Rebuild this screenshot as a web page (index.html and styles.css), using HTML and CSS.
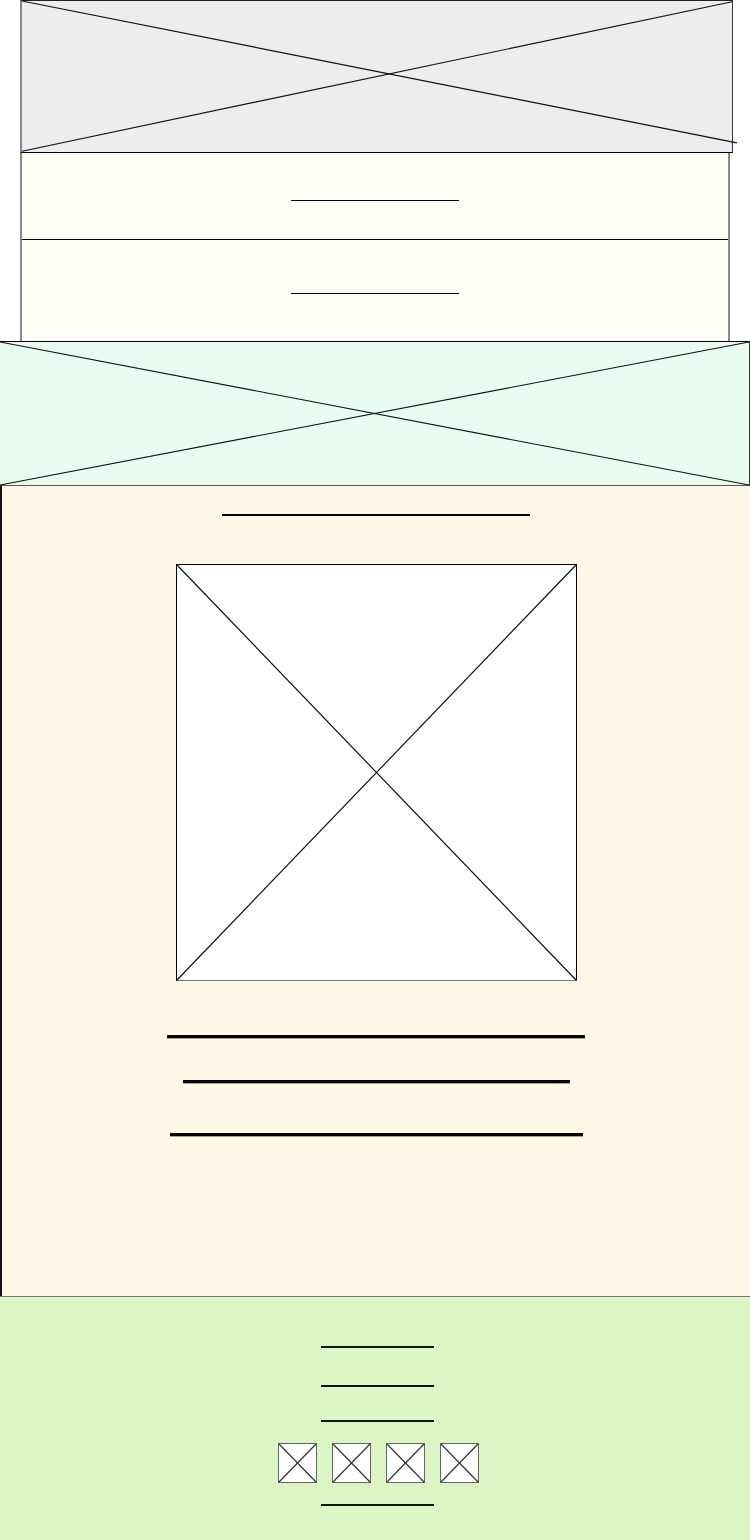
FILE: index.html
```html
<!DOCTYPE html>
<html>
<head>
<meta charset="utf-8">
<link rel="stylesheet" href="styles.css">
</head>
<body>
<div class="page">
  <header class="hero">
    <svg class="xph" viewBox="0 0 100 100" preserveAspectRatio="none">
      <line x1="0" y1="0" x2="100.7" y2="94" />
      <line x1="0" y1="99.5" x2="100" y2="0.5" />
    </svg>
  </header>
  <nav class="nav">
    <div class="nav-item nav-item-1"><span class="tline nav-line"></span></div>
    <div class="nav-item nav-item-2"><span class="tline nav-line"></span></div>
  </nav>
  <section class="banner">
    <svg class="xph" viewBox="0 0 100 100" preserveAspectRatio="none">
      <line x1="0" y1="0" x2="100" y2="100" />
      <line x1="0" y1="100" x2="100" y2="0" />
    </svg>
  </section>
  <main class="content">
    <span class="tline title-line"></span>
    <div class="photo">
      <svg class="xph" viewBox="0 0 100 100" preserveAspectRatio="none">
        <line x1="0" y1="0" x2="100" y2="100" />
        <line x1="0" y1="100" x2="100" y2="0" />
      </svg>
    </div>
    <span class="tline body-line body-line-1"></span>
    <span class="tline body-line body-line-2"></span>
    <span class="tline body-line body-line-3"></span>
  </main>
  <footer class="footer">
    <span class="tline foot-line foot-line-1"></span>
    <span class="tline foot-line foot-line-2"></span>
    <span class="tline foot-line foot-line-3"></span>
    <div class="icons">
      <div class="icon"><svg class="xph" viewBox="0 0 100 100" preserveAspectRatio="none"><line x1="0" y1="0" x2="100" y2="100" /><line x1="0" y1="100" x2="100" y2="0" /></svg></div>
      <div class="icon"><svg class="xph" viewBox="0 0 100 100" preserveAspectRatio="none"><line x1="0" y1="0" x2="100" y2="100" /><line x1="0" y1="100" x2="100" y2="0" /></svg></div>
      <div class="icon"><svg class="xph" viewBox="0 0 100 100" preserveAspectRatio="none"><line x1="0" y1="0" x2="100" y2="100" /><line x1="0" y1="100" x2="100" y2="0" /></svg></div>
      <div class="icon"><svg class="xph" viewBox="0 0 100 100" preserveAspectRatio="none"><line x1="0" y1="0" x2="100" y2="100" /><line x1="0" y1="100" x2="100" y2="0" /></svg></div>
    </div>
    <span class="tline foot-line foot-line-4"></span>
  </footer>
</div>
</body>
</html>
```
FILE: styles.css
```css
* { box-sizing: border-box; }
html, body { margin: 0; padding: 0; background: #ffffff; font-family: "Liberation Sans", Arial, sans-serif; }
.page { width: 750px; height: 1540px; display: flex; flex-direction: column; overflow: hidden; }

.xph { display: block; width: 100%; height: 100%; overflow: visible; }
.xph line { stroke: #111; stroke-width: 1.2; vector-effect: non-scaling-stroke; }

.tline { display: block; border-top: 1px solid #000; height: 0; }

.hero {
  margin-left: 20px; width: 713px; height: 153px;
  background: #eeecee;
  border-top: 1px solid #222; border-left: 2px solid #888; border-right: 1px solid #333; border-bottom: 1px solid #000;
}

.nav { margin-left: 20px; width: 710px; display: flex; flex-direction: column; border-left: 2px solid #888; border-right: 2px solid #888; }
.nav-item { background: #fefef6; display: flex; justify-content: center; }
.nav-item-1 { height: 87px; padding-top: 47px; border-bottom: 1px solid #000; }
.nav-item-2 { height: 101px; padding-top: 53px; }
.nav-line { width: 168px; }

.banner {
  width: 750px; height: 145px; background: #e8fdf0;
  border-top: 1px solid #000; border-right: 1px solid #333; border-bottom: 1px solid #555;
}

.content {
  width: 750px; height: 810px; background: #fef8e6;
  border-left: 2px solid #111;
  display: flex; flex-direction: column; align-items: center;
  padding-top: 28px;
}
.title-line { width: 308px; border-top-width: 2px; }
.photo { width: 401px; height: 417px; margin-top: 48px; background: #ffffff; border: 1px solid #000; border-bottom-color: #777; }
.body-line { border-top: 3px solid #000; border-bottom: 1px solid #a9a08a; }
.body-line-1 { width: 418px; margin-top: 54px; }
.body-line-2 { width: 387px; margin-top: 41px; }
.body-line-3 { width: 413px; margin-top: 49px; }

.footer {
  width: 750px; flex: 1; background: #dcf5c4;
  border-top: 1px solid #777;
  display: flex; flex-direction: column; align-items: center;
  padding-top: 49px;
}
.foot-line { width: 113px; margin-left: 4px; border-top: 2px solid #111; }
.foot-line-2 { margin-top: 37px; }
.foot-line-3 { margin-top: 33px; }
.foot-line-4 { margin-top: 21px; }
.icons { display: flex; gap: 15px; margin-top: 21px; margin-left: 6px; }
.icon { width: 39px; height: 40px; background: #ffffff; border: 1px solid #666; }
.icon .xph line { stroke: #333; }
```
